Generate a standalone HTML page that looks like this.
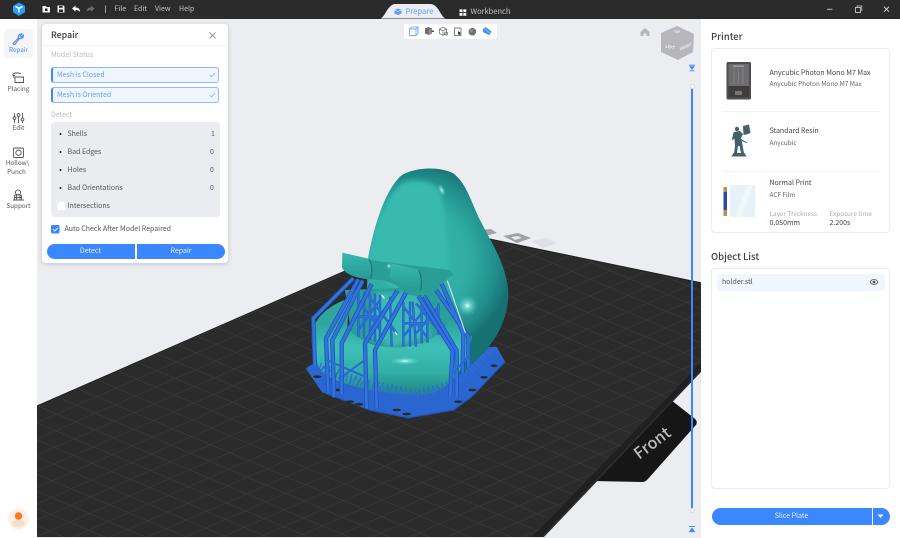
<!DOCTYPE html>
<html><head><meta charset="utf-8"><style>
*{box-sizing:border-box;margin:0;padding:0}
html,body{width:900px;height:537px;overflow:hidden;background:#ecedf0;font-family:"Noto Sans CJK SC","Liberation Sans",sans-serif}
.a{position:absolute}
.t{position:absolute;white-space:nowrap;line-height:10px;height:10px;font-size:7px;color:#555}
svg{position:absolute;overflow:visible}
.side{text-align:center;left:0;width:37px;font-size:6.3px;color:#555}
.card{position:absolute;left:711px;width:179px;background:#fff;border:1px solid #ececee;border-radius:4px}
.fld{position:absolute;left:51px;width:168px;height:15.5px;background:#f0f6ff;border:1px solid #8db9ff;border-left:2px solid #3b87ff;border-radius:3px}
.btn{position:absolute;background:#3b87ff;color:#e8f1ff;font-size:7px;text-align:center}
</style></head><body>

<svg width="900" height="537" style="left:0;top:0">
<defs>
<pattern id="g" width="100" height="100" patternUnits="userSpaceOnUse" patternTransform="matrix(.2 -.087 .19 .08 37 406)">
<path d="M0 0H100M0 0V100" stroke="#424242" stroke-width="5" fill="none"/>
</pattern>
<radialGradient id="bd" gradientUnits="userSpaceOnUse" cx="375" cy="300" r="290">
<stop offset="0" stop-color="#38b8af"/><stop offset=".58" stop-color="#2faca4"/><stop offset=".85" stop-color="#218d8b"/><stop offset="1" stop-color="#177272"/>
</radialGradient>
<linearGradient id="rg" gradientUnits="userSpaceOnUse" x1="0" y1="490" x2="0" y2="700">
<stop offset="0" stop-color="#2da59e"/><stop offset=".35" stop-color="#3ec0b7"/><stop offset=".7" stop-color="#31aea6"/><stop offset="1" stop-color="#208885"/>
</linearGradient>
<linearGradient id="fl" x1="0" y1="0" x2="0" y2="1">
<stop offset="0" stop-color="#38b8af"/><stop offset="1" stop-color="#279a94"/>
</linearGradient>
<radialGradient id="hl"><stop offset="0" stop-color="#e4fffb"/><stop offset=".25" stop-color="#8fe8e0" stop-opacity=".8"/><stop offset="1" stop-color="#46c9c0" stop-opacity="0"/></radialGradient>
<filter id="b" x="-20%" y="-20%" width="140%" height="140%"><feGaussianBlur stdDeviation="7"/></filter>
<filter id="b2" x="-5%" y="-5%" width="110%" height="110%"><feGaussianBlur stdDeviation=".25"/></filter>
<clipPath id="cb"><path d="M235 290C250 210 280 100 330 50C360 25 440 15 490 40C530 70 545 130 570 180C600 240 640 300 652 370C665 450 630 530 570 590C520 640 470 680 400 700L300 600L230 400Z"/></clipPath>
<g id="sup">
<path d="M75 620L70 475L190 355"/>
<path d="M115 700L108 535L205 358"/>
<path d="M132 712L127 540L218 362"/>
<path d="M155 702V550L245 372"/>
<path d="M230 745L225 550L322 392"/>
<path d="M260 745L255 570L348 398"/>
<path d="M480 712L488 572L385 408"/>
<path d="M500 712V572L402 408"/>
<path d="M535 622V530L438 390"/>
<path d="M518 640L520 520L455 372"/>
</g>
<g id="inn">
<path d="M205 530V395M222 535V395M240 540V400M255 545V400M340 560V425M360 560V425M378 560L368 425M395 550V425M412 548V425M270 550V405M305 560L300 410M445 525V430"/>
<path d="M205 420L270 510M270 420L205 510M340 440L410 530M410 440L340 530M230 400L320 520M310 410L240 510M378 430L445 510M445 440L378 520M205 470H270M340 490H412"/>
</g>
</defs>

<!-- tab -->
<path d="M592 481L671 400L694 418Q699 422 695 426L647 480Q645 482 642 482Z" fill="#161616"/>
<text transform="translate(653 444) rotate(-37)" text-anchor="middle" dominant-baseline="middle" font-size="16" font-weight="500" fill="#bdbdbd" font-family="Noto Sans CJK SC,Liberation Sans,sans-serif">Front</text>

<!-- small marks -->
<g filter="url(#b2)">
<path d="M478 230L491 229L497 233L485 236Z" fill="#a3a3a5"/>
<path d="M503 236L518 233L531 238L517 243Z" fill="#a0a0a2"/><path d="M511 237l7-1 4 2-7 2z" fill="#e6e6e8"/>
<path d="M531 241L546 238L558 243L543 248Z" fill="#dfe0e3"/>
</g>

<!-- plate -->
<path d="M37 406L441 229L702 283V371L544 537H37Z" fill="#2b2b2b"/>
<path d="M37 406L441 229L702 283V371L544 537H37Z" fill="url(#g)"/>
<path d="M702 369L541 537H532L702 362Z" fill="#202020"/>
<path d="M37 406L441 229" stroke="#1f1f1f" stroke-width="1"/>
<path d="M441 229L702 283" stroke="#1f1f1f" stroke-width="1"/>

<!-- model, coordinates are zoom space -->
<g transform="translate(290 160) scale(.33333)">
<!-- base -->
<path d="M47 625L110 585L620 560L645 605L545 710L490 750L355 773L240 750L95 695Z" fill="#2a66d0"/>
<path d="M95 695L240 750L355 773L490 750L545 710L645 605" fill="none" stroke="#2058bb" stroke-width="4"/>
<g fill="#2b2b2b">
<ellipse cx="82" cy="650" rx="13" ry="4"/><ellipse cx="140" cy="690" rx="13" ry="4"/><ellipse cx="180" cy="725" rx="13" ry="4"/><ellipse cx="207" cy="733" rx="13" ry="4"/><ellipse cx="320" cy="750" rx="13" ry="4"/><ellipse cx="350" cy="762" rx="13" ry="4"/><ellipse cx="505" cy="725" rx="12" ry="4"/><ellipse cx="547" cy="690" rx="12" ry="4"/><ellipse cx="582" cy="652" rx="11" ry="4"/><ellipse cx="612" cy="617" rx="10" ry="4"/>
</g>
<g filter="url(#b2)">
<!-- body -->
<path d="M235 290C250 210 280 100 330 50C360 25 440 15 490 40C530 70 545 130 570 180C600 240 640 300 652 370C665 450 630 530 570 590C520 640 470 680 400 700L300 600L230 400Z" fill="url(#bd)"/>
<!-- soft face -->
<g clip-path="url(#cb)"><path d="M235 290C250 210 285 110 335 70C365 55 420 60 445 85C460 110 465 170 470 240C475 290 480 320 480 350L330 420Z" fill="#38bab1" filter="url(#b)"/></g>
<!-- hole -->
<path d="M165 390L445 380L495 480L400 560L300 570L185 530Z" fill="#2b9e98"/>
<path d="M255 400h130l40 130-120 30-60-30Z" fill="#3bbab1" filter="url(#b)"/>
<!-- ring -->
<path d="M66 525C70 468 128 430 178 415L172 498C192 540 260 566 330 562C400 556 450 530 482 478L545 530C530 640 470 694 400 704C300 704 170 684 108 644C78 622 62 575 66 525Z" fill="url(#rg)"/>
<!-- inner supports -->
<use href="#inn" fill="none" stroke="#2257bd" stroke-width="7"/>
<use href="#inn" fill="none" stroke="#2f70de" stroke-width="4"/>
<path d="M275 405l8 10M315 515l6 10" stroke="#e8eef5" stroke-width="4"/>
<!-- head underside -->
<path d="M238 300L480 330L492 345C470 350 450 388 420 402C395 414 350 408 332 388C310 366 280 358 240 358Z" fill="#2a9d97"/>
<!-- flaps -->
<path d="M157 278L235 296C248 310 248 342 241 358C208 356 166 346 156 322Z" fill="url(#fl)"/>
<path d="M237 298C247 312 247 340 242 356" fill="none" stroke="#1a7d79" stroke-width="4"/>
<path d="M306 310L385 329C397 350 397 378 391 392C350 386 308 368 298 348Z" fill="url(#fl)"/>
<path d="M386 331C396 350 396 376 392 390" fill="none" stroke="#1a7d79" stroke-width="4"/>
<!-- short base supports -->
<path d="M95 625L130 642L235 682L380 706L490 680L545 630L600 572" fill="none" stroke="#2f6cd8" stroke-width="18" stroke-dasharray="5 6 3 9"/>
<path d="M90 615L230 665L380 695L500 665" fill="none" stroke="#2e6bd8" stroke-width="14" stroke-dasharray="4 10"/>
<!-- outer supports -->
<use href="#sup" fill="none" stroke="#2053b6" stroke-width="13" stroke-linejoin="round"/>
<use href="#sup" fill="none" stroke="#3173e2" stroke-width="8" stroke-linejoin="round"/>
<path d="M526 518L472 362" stroke="#dfe8f5" stroke-width="3"/>
<path d="M110 600L225 650M225 600L155 650M488 640L535 590" stroke="#2b68d6" stroke-width="6" fill="none"/>
<!-- highlights -->
<circle cx="532" cy="437" r="32" fill="url(#hl)"/>
<ellipse cx="345" cy="603" rx="48" ry="12" fill="url(#hl)"/>
<ellipse cx="455" cy="90" rx="10" ry="20" fill="url(#hl)" transform="rotate(-25 455 90)"/>
<circle cx="297" cy="318" r="9" fill="url(#hl)"/>
</g>
</g>
</svg>

<!-- top bar -->
<div class="a" style="left:0;top:0;width:900px;height:18.5px;background:#2b2b2b"></div>
<!-- left rail -->
<div class="a" style="left:0;top:18.5px;width:37px;height:519px;background:#fff"></div>
<!-- right panel -->
<div class="a" style="left:701px;top:18.5px;width:199px;height:519px;background:#fff"></div>

<svg width="900" height="60" style="left:0;top:0">
<!-- logo -->
<path d="M19 2.500l6 3.400v6.400l-6 3.600-6-3.600V5.900Z" fill="#2a9df4"/><path d="M15.500 6.500L19 8.500l3.500-2M19 8.500v4" stroke="#e6f6ff" stroke-width="1.600" fill="none"/>
<!-- folder -->
<path d="M42.500 6h3l1 1h3.500v5.500h-7.500Z" fill="#f2f2f2"/><rect x="45" y="8.500" width="2.500" height="2.500" fill="#2b2b2b"/>
<!-- save -->
<path d="M57.500 5.500h6l1 1v6h-7Z" fill="#f2f2f2"/><rect x="59" y="6" width="3.500" height="1.800" fill="#2b2b2b"/><rect x="59" y="9.500" width="4" height="2.500" fill="#2b2b2b"/>
<!-- undo -->
<path d="M72 8.500l3.500-3v2c3 0 4.500 1.500 4.500 4.500-1-1.500-2.500-2-4.500-2v1.800Z" fill="#f2f2f2"/>
<path d="M94.500 8.500l-3.500-3v2c-3 0-4.500 1.500-4.500 4.500 1-1.500 2.500-2 4.500-2v1.800Z" fill="#6d6d6d"/>
<path d="M105.500 5.500v7.500" stroke="#bbb" stroke-width=".8"/>
<!-- tab -->
<path d="M380 18.500C385 18 387 5 395 4H431C439 5 441 18 446 18.500Z" fill="#ecedf0"/>
<path d="M398 8.500l3.500 1.500v3.500l-3.500 1.500-3.500-1.500V10Z" fill="#5a9bff"/><path d="M394.500 10l3.500 1.500 3.500-1.500" stroke="#ecedf0" stroke-width=".6" fill="none"/>
<g fill="#f2f2f2"><rect x="459.500" y="9.300" width="3" height="2.800"/><rect x="463.300" y="9.300" width="3" height="2.800"/><rect x="459.500" y="13" width="3" height="2.800"/><rect x="463.300" y="13" width="3" height="2.800"/></g>
<!-- window -->
<path d="M827 9.300h5.500" stroke="#bbb" stroke-width="1"/>
<rect x="855.500" y="7.500" width="5" height="5" fill="none" stroke="#c8c8c8" stroke-width=".9"/><path d="M857 7V6h4.800v5" fill="none" stroke="#c8c8c8" stroke-width=".8"/>
<path d="M884 6.700l5 5M889 6.700l-5 5" stroke="#ddd" stroke-width=".9"/>
</svg>

<div class="t" style="left:114.500px;top:4px;color:#c9c9c9">File</div>
<div class="t" style="left:134px;top:4px;color:#c9c9c9">Edit</div>
<div class="t" style="left:155px;top:4px;color:#c9c9c9">View</div>
<div class="t" style="left:179px;top:4px;color:#c9c9c9">Help</div>
<div class="t" style="left:405.500px;top:7px;font-size:7.600px;color:#5a9bff">Prepare</div>
<div class="t" style="left:470.500px;top:7px;font-size:7.500px;color:#c4c4c4">Workbench</div>

<!-- sidebar -->
<div class="a" style="left:4px;top:29px;width:29px;height:29px;background:#f4f5f7;border-radius:4px"></div>
<svg width="37" height="220" style="left:0;top:0">
<g fill="none" stroke="#4a8df0" stroke-width="1.100"><path d="M14 44.500l-1-1 5.500-5.500c-.8-2.300 1-4.500 3.500-4l-1.800 1.900 1.300 1.300L23.300 35c.6 2.500-1.700 4.300-4 3.500l-4.300 6Z"/></g>
<g fill="none" stroke="#555" stroke-width=".9">
<path d="M15 77h8.500v5.500H15ZM15 77h-2M15 75.500h-2V74c2-1.500 6-1.500 8 0"/>
<path d="M14.500 113v10M18.500 113v10M22.500 113v10"/><circle cx="14.500" cy="118" r="1.400" fill="#fff"/><circle cx="18.500" cy="115" r="1.400" fill="#fff"/><circle cx="22.500" cy="119.500" r="1.400" fill="#fff"/>
<rect x="13.500" y="148" width="10" height="9.500" rx="1"/><circle cx="18.500" cy="152.700" r="2.700"/>
<circle cx="18" cy="192.500" r="2.600"/><path d="M14.500 200v-4.500l3.500-1 3.500 1V200M13 200h11M16.500 195v5M20 195v5M15 197.500h6"/>
</g>
</svg>
<div class="t side" style="top:44.500px;color:#4a8df0">Repair</div>
<div class="t side" style="top:84px">Placing</div>
<div class="t side" style="top:123px">Edit</div>
<div class="t side" style="top:158px;left:-1px">Hollow\</div>
<div class="t side" style="top:166.500px;left:-2px">Punch</div>
<div class="t side" style="top:201px">Support</div>
<svg width="37" height="537" style="left:0;top:0">
<circle cx="18.500" cy="519" r="10.500" fill="#fdf0e9"/>
<ellipse cx="18.500" cy="523.500" rx="6.500" ry="3.300" fill="#fcd9c2"/>
<circle cx="18.500" cy="516" r="3.700" fill="#fb7a1d"/>
</svg>

<!-- repair panel -->
<div class="a" style="left:42px;top:24px;width:186px;height:239px;background:#fff;border-radius:4px;box-shadow:0 1px 5px rgba(0,0,0,.18)"></div>
<div class="a" style="left:42px;top:45px;width:186px;height:1px;background:#f3f3f4"></div>
<div class="t" style="left:51px;top:30px;font-size:8.800px;font-weight:500;color:#3a3a3a">Repair</div>
<svg width="10" height="10" style="left:207.500px;top:30.500px"><path d="M1.500 1.500l6 6M7.500 1.500l-6 6" stroke="#777" stroke-width=".8"/></svg>
<div class="t" style="left:51px;top:50px;color:#bdbdbd">Model Status</div>
<div class="fld" style="top:67px"></div>
<div class="fld" style="top:87px"></div>
<div class="t" style="left:57px;top:70px;color:#5f9ffb">Mesh is Closed</div>
<div class="t" style="left:57px;top:90px;color:#5f9ffb">Mesh is Oriented</div>
<svg width="230" height="110" style="left:0;top:0"><path d="M209.800 75l1.800 1.800 3.400-3.600M209.800 95l1.800 1.800 3.400-3.600" fill="none" stroke="#8db9ff" stroke-width=".9"/></svg>
<div class="t" style="left:51px;top:109.500px;color:#bdbdbd">Detect</div>
<div class="a" style="left:51px;top:122px;width:168.500px;height:95px;background:#ebecef;border-radius:4px"></div>
<svg width="230" height="240" style="left:0;top:0"><g fill="#222"><circle cx="60.500" cy="134" r="1"/><circle cx="60.500" cy="152" r="1"/><circle cx="60.500" cy="170" r="1"/><circle cx="60.500" cy="188" r="1"/></g></svg>
<div class="t" style="left:67.500px;top:129px">Shells</div><div class="t" style="left:211px;top:129px">1</div>
<div class="t" style="left:67.500px;top:147px">Bad Edges</div><div class="t" style="left:210px;top:147px">0</div>
<div class="t" style="left:67.500px;top:165px">Holes</div><div class="t" style="left:210px;top:165px">0</div>
<div class="t" style="left:67.500px;top:183px">Bad Orientations</div><div class="t" style="left:210px;top:183px">0</div>
<div class="a" style="left:56.500px;top:201.500px;width:8px;height:8px;background:#fff;border-radius:2px"></div>
<div class="t" style="left:67.500px;top:200.500px">Intersections</div>
<svg width="9" height="9" style="left:51px;top:225px"><rect width="8.500" height="8.500" rx="1.500" fill="#3b87ff"/><path d="M2 4.300l1.700 1.700 3-3" fill="none" stroke="#fff" stroke-width=".9"/></svg>
<div class="t" style="left:64.500px;top:224px">Auto Check After Model Repaired</div>
<div class="btn" style="left:46.500px;top:243.500px;width:88px;height:15.500px;line-height:15.500px;border-radius:8px 0 0 8px">Detect</div>
<div class="btn" style="left:137px;top:243.500px;width:88px;height:15.500px;line-height:15.500px;border-radius:0 8px 8px 0">Repair</div>

<!-- view toolbar -->
<div class="a" style="left:404px;top:24px;width:93px;height:15px;background:#fff;border-radius:2px"></div>
<svg width="900" height="90" style="left:0;top:0">
<g fill="none" stroke="#5a9bff" stroke-width=".8"><rect x="409.500" y="29" width="6.500" height="6.500"/><path d="M409.500 29l2-2h6.500v6.500l-2 2M416 29l2-2"/></g>
<path d="M425 28.500l3.500-1.500 3.500 1.500v5l-3.500 1.500-3.500-1.500Z" fill="#6b6b6b"/><path d="M428.500 30v5l3.500-1.500v-5Z" fill="#8d8d8d"/><rect x="431.500" y="30.500" width="2.500" height="1.500" fill="#555"/>
<g fill="none" stroke="#666" stroke-width=".7"><path d="M439.500 29l3.500-1.800 3.500 1.800v4.500l-3.500 1.800-3.500-1.800ZM439.500 29l3.500 1.800 3.500-1.800M443 30.800v4.500"/><circle cx="446" cy="33.500" r="1.500"/></g>
<rect x="454.500" y="28" width="6.500" height="7.500" fill="none" stroke="#666" stroke-width=".8"/><path d="M458 31l3 2-1.200.5.800 1.500-2.500-.5Z" fill="#333"/>
<circle cx="472.300" cy="31.700" r="3.800" fill="#6e6e6e"/><circle cx="471.300" cy="30.700" r="1.800" fill="#8d8d8d"/>
<path d="M482.500 29.500l3-2.500 6 4.500-2 3.500-6-2.500Z" fill="#3d8ff5"/><path d="M484 28.500l6 4.800" stroke="#9cc6fb" stroke-width=".8"/>
<!-- home -->
<path d="M640.500 32l4.500-4 4.500 4v4h-3v-2.500h-3V36h-3Z" fill="#b7b7ba"/>
<!-- cube -->
<path d="M677 26L694 34L693 52L678 60L661 52L661 33Z" fill="#b6b6bc"/>
<text x="670" y="48.500" font-size="4" fill="#f4f4f6" text-anchor="middle" transform="rotate(10 670 48)" font-weight="700">LEFT</text>
<text x="686" y="48" font-size="3.800" fill="#f4f4f6" text-anchor="middle" transform="rotate(-25 686 47)" font-weight="700">FRONT</text>
<text x="677" y="33" font-size="3" fill="#f4f4f6" text-anchor="middle" font-weight="700">TOP</text>
<!-- slider top icon -->
<path d="M689 65.200h6" stroke="#3b87ff" stroke-width="1"/><path d="M689.200 66.200h5.600L692 70Z" fill="#3b87ff"/><path d="M689.500 70.800h5" stroke="#3b87ff" stroke-width=".9"/>
</svg>
<div class="a" style="left:691px;top:86px;width:2px;height:423px;background:#3b87ff"></div>
<div class="a" style="left:689.500px;top:83.500px;width:5px;height:5px;border-radius:50%;background:#fff;border:1px solid #ddd"></div>
<div class="a" style="left:689.500px;top:507.500px;width:5px;height:5px;border-radius:50%;background:#fff;border:1px solid #ddd"></div>
<svg width="10" height="10" style="left:687px;top:523.500px"><path d="M2 2.500h6" stroke="#3b87ff" stroke-width=".9"/><path d="M5 3.500l2.800 3.700H2.200Z" fill="#3b87ff"/><path d="M2 7.700h6" stroke="#3b87ff" stroke-width="1"/></svg>

<!-- right panel content -->
<div class="t" style="left:711px;top:31px;font-size:9.500px;font-weight:500;color:#3f3f3f">Printer</div>
<div class="card" style="top:48px;height:185px"></div>
<div class="a" style="left:722px;top:111px;width:158px;height:1px;background:#f4f4f5"></div>
<div class="a" style="left:722px;top:170.500px;width:158px;height:1px;background:#f4f4f5"></div>
<div class="t" style="left:769.500px;top:67.500px;font-size:7px;color:#444">Anycubic Photon Mono M7 Max</div>
<div class="t" style="left:769.500px;top:79px;font-size:6.400px;color:#666">Anycubic Photon Mono M7 Max</div>
<div class="t" style="left:769.500px;top:126px;color:#444">Standard Resin</div>
<div class="t" style="left:769.500px;top:138px;font-size:6.400px;color:#666">Anycubic</div>
<div class="t" style="left:769.500px;top:178px;color:#444">Normal Print</div>
<div class="t" style="left:769.500px;top:190px;font-size:6.400px;color:#666">ACF Film</div>
<div class="t" style="left:769.500px;top:208.500px;font-size:6.400px;color:#b0b0b0">Layer Thickness</div>
<div class="t" style="left:829.500px;top:208.500px;font-size:6.400px;color:#b0b0b0">Exposure time</div>
<div class="t" style="left:769.500px;top:218px;color:#444">0.050mm</div>
<div class="t" style="left:829.500px;top:218px;color:#444">2.200s</div>

<svg width="900" height="240" style="left:0;top:0">
<rect x="726.500" y="62" width="24.500" height="37.500" rx="1.500" fill="#4d4d4f"/>
<rect x="728.500" y="64" width="20.500" height="22" fill="#6d6d70"/>
<rect x="728.500" y="86" width="20.500" height="11" fill="#3f3c3a"/>
<path d="M734 68v16M738.500 68v16M743 68v16" stroke="#8a8a8e" stroke-width=".7"/>
<rect x="735" y="91" width="7" height="4" fill="#777"/>
<rect x="733" y="65.500" width="11" height="1.300" fill="#aaa"/>
<!-- figure -->
<g fill="#45626c">
<circle cx="737" cy="129" r="2.200"/>
<path d="M743 126l6-1.500 1.500 8.500-4 1.500-3 .5Z"/>
<path d="M734 132l6-1 3 3-2 4 1 4 1 6 1 5h-3l-1.500-7-1.500 0-1 7h-3l1-7-.5-7-2.500 1 1-6Z"/>
<path d="M741 139l6 3.500-.5.800-6-3Z"/>
<path d="M733.500 153h11l2 3.500h-15Z"/>
</g>
<!-- film -->
<rect x="723.500" y="187" width="3.500" height="29" fill="#c18a50"/>
<rect x="723.500" y="192" width="3.500" height="18" fill="#2c4a9a"/>
<rect x="730" y="185" width="25" height="32" fill="#e6f1f9"/>
<path d="M735 217L748 185h5L741 217Z" fill="#f1f8fc"/>
</svg>

<div class="t" style="left:711px;top:251px;font-size:9.500px;font-weight:500;color:#3f3f3f">Object List</div>
<div class="card" style="top:268px;height:221px"></div>
<div class="a" style="left:717px;top:274px;width:167.500px;height:17px;background:#f0f6ff;border-radius:3px"></div>
<div class="t" style="left:722px;top:277px;color:#555">holder.stl</div>
<svg width="10" height="8" style="left:869px;top:278px"><path d="M1 4c2-3.300 6-3.300 8 0-2 3.300-6 3.300-8 0Z" fill="none" stroke="#555" stroke-width=".8"/><circle cx="5" cy="4" r="1.400" fill="#555"/></svg>

<div class="btn" style="left:711.500px;top:507.500px;width:160px;height:17px;line-height:17px;border-radius:8.500px 0 0 8.500px">Slice Plate</div>
<div class="btn" style="left:873px;top:507.500px;width:17px;height:17px;border-radius:0 8.500px 8.500px 0"></div>
<svg width="8" height="5" style="left:877px;top:514px"><path d="M.5.500h6L3.500 4Z" fill="#fff"/></svg>

</body></html>
